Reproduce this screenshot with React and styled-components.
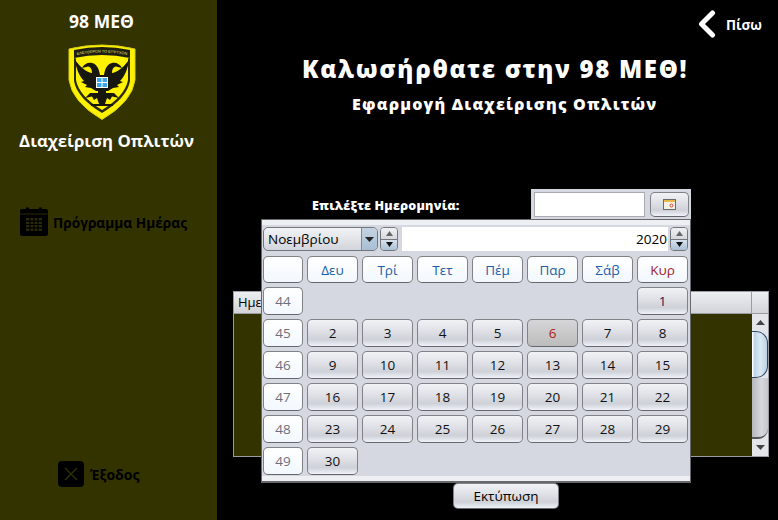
import React from 'react';
import styled, { createGlobalStyle, css } from 'styled-components';

const Global = createGlobalStyle`
  html, body { margin: 0; padding: 0; background: #000; }
  * { box-sizing: border-box; }
`;

const Page = styled.div`
  display: flex;
  width: 778px;
  height: 520px;
  overflow: hidden;
  font-family: 'Open Sans', 'Noto Sans', sans-serif;
`;

const Sidebar = styled.aside`
  width: 217px;
  height: 520px;
  background: #333300;
  display: flex;
  flex-direction: column;
  align-items: center;
  flex-shrink: 0;
`;

const UnitName = styled.div`
  margin: 10px 14px 0 0;
  color: #fff;
  font-size: 17.5px;
  line-height: 22px;
  font-weight: 700;
`;

const CrestWrap = styled.div`
  margin: 12px 14px 0 0;
  height: 76px;
`;

const SideTitle = styled.div`
  margin: 9px 4px 0 0;
  color: #fff;
  font-size: 16.8px;
  line-height: 24px;
  font-weight: 700;
  white-space: nowrap;
`;

const NavItem = styled.div`
  display: flex;
  align-items: center;
  align-self: flex-start;
  color: #000;
  font-weight: 700;
  white-space: nowrap;
  font-size: ${({ $size }) => $size}px;
  gap: ${({ $gap }) => $gap}px;
  margin-left: ${({ $left }) => $left}px;
  margin-top: ${({ $top }) => $top}px;
`;

const NavLabel = styled.span`
  padding-top: 1px;
`;

const ExitBox = styled.div`
  width: 26px;
  height: 26px;
  border-radius: 4px;
  background: #000;
  display: flex;
  align-items: center;
  justify-content: center;
`;

const Main = styled.main`
  position: relative;
  flex: 1;
  display: flex;
  flex-direction: column;
  background: #000;
  color: #fff;
`;

const BackRow = styled.div`
  display: flex;
  justify-content: flex-end;
  align-items: center;
  gap: 10px;
  height: 28px;
  margin: 10px 16px 0 0;
  font-size: 13.5px;
  font-weight: 700;
`;

const Title = styled.h1`
  margin: 15px 0 0 85px;
  font-size: 24px;
  line-height: 32px;
  font-weight: 800;
  letter-spacing: 1.7px;
  white-space: nowrap;
`;

const Subtitle = styled.h2`
  margin: 9px 0 0 135px;
  font-size: 16px;
  line-height: 20px;
  font-weight: 800;
  letter-spacing: 1.2px;
  white-space: nowrap;
`;

const DateRow = styled.div`
  display: flex;
  align-items: center;
  margin: 75px 0 0 95px;
  height: 30px;
`;

const DateLabel = styled.div`
  width: 219px;
  padding-top: 2px;
  font-size: 12.5px;
  font-weight: 800;
  letter-spacing: 0.2px;
  white-space: nowrap;
`;

const Picker = styled.div`
  width: 160px;
  height: 30px;
  background: #d5d8e0;
  display: flex;
  align-items: center;
  padding: 0 2px 0 3px;
  gap: 5px;
`;

const DateInput = styled.div`
  width: 111px;
  height: 25px;
  background: #fff;
  border: 1px solid #a9abb0;
`;

const buttonFace = css`
  background: linear-gradient(#f1f2f6 0%, #e0e2e8 40%, #cfd1d8 75%, #f0f2fa 100%);
  border: 1px solid #808286;
  border-bottom-color: #66686c;
  border-radius: 5px;
`;

const PickerButton = styled.div`
  ${buttonFace}
  width: 39px;
  height: 25px;
  display: flex;
  align-items: center;
  justify-content: center;
`;

const Grid = styled.div`
  margin: 72px 0 0 16px;
  width: 536px;
  height: 166px;
  border: 1px solid #9a9ca3;
  background: #333300;
  display: flex;
  flex-direction: column;
  color: #000;
`;

const GridHeader = styled.div`
  height: 22px;
  background: linear-gradient(#eceef2, #d2d4da);
  border-bottom: 1px solid #9a9ca3;
  display: flex;
  font-size: 13px;
  line-height: 20px;
`;

const HeaderCell = styled.div`
  flex: 1;
  padding-left: 4px;
  border-right: 1px solid #9a9ca3;
`;

const HeaderEnd = styled.div`
  width: 16px;
`;

const GridBody = styled.div`
  flex: 1;
  display: flex;
  justify-content: flex-end;
`;

const Scrollbar = styled.div`
  width: 16px;
  background: #e4e5ea;
  display: flex;
  flex-direction: column;
  align-items: center;
`;

const ScrollArrow = styled.div`
  height: ${({ $h }) => $h}px;
  width: 100%;
  flex-shrink: 0;
  display: flex;
  align-items: center;
  justify-content: center;
`;

const Thumb = styled.div`
  width: 100%;
  height: 47px;
  flex-shrink: 0;
  border: 1px solid #2d4a60;
  border-left: 0;
  border-radius: 0 12px 12px 0;
  background: linear-gradient(90deg, #fff 0 1px, #b7d3ea 2px, #dce9f4 55%, #bcd2e5);
`;

const Track = styled.div`
  flex: 1;
  width: 100%;
  border-bottom: 2px solid #555;
  border-radius: 0 0 10px 0;
  background: linear-gradient(90deg, #b5b7bd, #d6d8dd 60%, #c3c5cb);
`;

const PrintButton = styled.div`
  ${buttonFace}
  align-self: flex-start;
  margin: 26px 0 0 236px;
  width: 106px;
  height: 26px;
  color: #000;
  font-size: 13.5px;
  line-height: 24px;
  text-align: center;
`;

const Popup = styled.div`
  position: absolute;
  left: 44px;
  top: 219px;
  width: 430px;
  height: 264px;
  border: 1px solid #66686d;
  border-width: 1px 1px 2px 1px;
  background: #d5d8e0;
  padding: 7px 2px 0 1px;
  color: #000;
  font-size: 13.5px;
  &::before {
    content: '';
    position: absolute;
    left: 0;
    right: 0;
    top: 0;
    height: 5px;
    background: #eeeff3;
  }
  &::after {
    content: '';
    position: absolute;
    left: 0;
    right: 0;
    bottom: 0;
    height: 5px;
    background: #eeeff3;
  }
`;

const PopupTop = styled.div`
  display: flex;
  align-items: center;
  height: 24px;
`;

const MonthSelect = styled.div`
  width: 115px;
  height: 24px;
  border: 1px solid #73767c;
  border-radius: 5px;
  background: linear-gradient(#f2f3f6, #d2d5dc);
  display: flex;
  align-items: center;
  justify-content: space-between;
  padding-left: 4px;
  overflow: hidden;
`;

const MonthArrow = styled.div`
  width: 16px;
  height: 22px;
  background: linear-gradient(#c4d3e2, #a8bfd4);
  border-left: 1px solid #7f8a96;
  display: flex;
  align-items: center;
  justify-content: center;
`;

const Spinner = styled.div`
  width: 18px;
  height: 24px;
  margin-left: ${({ $left }) => $left}px;
  border: 1px solid #73767c;
  border-radius: 4px;
  display: flex;
  flex-direction: column;
  overflow: hidden;
`;

const SpinPart = styled.div`
  flex: 1;
  display: flex;
  align-items: center;
  justify-content: center;
  background: ${({ $active }) => ($active ? 'linear-gradient(#d8e2ec, #a9c0d6)' : 'linear-gradient(#f0f1f4, #d6d8de)')};
  ${({ $active }) => $active && 'border-top: 1px solid #73767c;'}
`;

const YearField = styled.div`
  margin-left: 4px;
  width: 266px;
  height: 24px;
  background: #fff;
  text-align: right;
  line-height: 24px;
  padding-right: 1px;
`;

const Days = styled.div`
  display: grid;
  grid-template-columns: 40px repeat(7, 51px);
  grid-template-rows: 27px repeat(6, 28px);
  gap: 4px;
  margin-top: 5px;
  font-size: 13.5px;
`;

const DayCell = styled.div`
  ${buttonFace}
  grid-column: ${({ $col }) => $col || 'auto'};
  display: flex;
  align-items: center;
  justify-content: center;
  color: ${({ $first }) => ($first ? '#2a1050' : '#111')};
  ${({ $today }) => $today && css`
    background: linear-gradient(#d6d6d8, #bcbcbc);
    color: #b01818;
  `}
`;

const WeekCell = styled.div`
  border: 1px solid #808286;
  border-bottom-color: #66686c;
  border-radius: 5px;
  background: linear-gradient(#fff, #f2f8fe);
  grid-column: 1;
  display: flex;
  align-items: center;
  justify-content: center;
  color: ${({ $head }) => $head || '#706f78'};
`;

const HeadCell = styled(WeekCell)`
  grid-column: auto;
`;

function Crest() {
  const half = (
    <>
      <path d="M32 31 C31 25 29 20 24 19 C20 18 16 20 14 24 L20 22.500 C23 23 24 26 24 29 C20 29 13 24 7 16 C8 24 11 32 16 37 L13 38 L19 41 L17 43 L23 44 L28 47 L34 47 L34 31 Z" fill="#17170f" />
      <path d="M30 44 L30 49 L22 49 L17 54 L24 52.500 L26 56 L29 54 L31 60 L34 62 L34 44 Z" fill="#17170f" />
      <path d="M23 60 H34 V62 H23 Z" fill="#17170f" />
    </>
  );
  return (
    <svg width="68" height="76" viewBox="0 0 68 76">
      <path d="M1 5 Q34 -3 67 5 L67 36 Q64 58 34 75.500 Q4 58 1 36 Z" fill="#fff200" stroke="#d8cf10" />
      <path d="M6 6 Q34 0 62 6 L62 14 Q34 8 6 14 Z" fill="#1d1d12" />
      <path id="shieldText" d="M7 11.500 Q34 5.500 61 11.500" fill="none" />
      <text fontFamily="'Liberation Sans', sans-serif" fontSize="3.800" fill="#e8e060" textAnchor="middle">
        <textPath href="#shieldText" startOffset="50%">ΕΛΕΥΘΕΡΟΝ ΤΟ ΕΥΨΥΧΟΝ</textPath>
      </text>
      <path d="M6 14 L6 37 Q9 54 34 69 Q59 54 62 37 L62 14 L60 14.500 L60 36 Q57 52 34 66 Q11 52 8 36 L8 14.500 Z" fill="#2a2a10" />
      {half}
      <g transform="translate(68 0) scale(-1 1)">{half}</g>
      <rect x="28" y="33" width="12" height="11" fill="#fff" />
      <path d="M29 34h4.500v4h-4.500z M34.500 34h4.500v4h-4.500z M29 39h4.500v4h-4.500z M34.500 39h4.500v4h-4.500z" fill="#3ea5ea" />
    </svg>
  );
}

function CalendarIcon() {
  return (
    <svg width="28" height="29" viewBox="0 0 28 29">
      <path d="M2 2 H6 V0.500 H9 V2 H19 V0.500 H22 V2 H26 Q28 2 28 4 V27 Q28 29 26 29 H2 Q0 29 0 27 V4 Q0 2 2 2 Z" fill="#000" />
      <path d="M0 7 H28" stroke="#333300" strokeWidth="0.800" />
      <path d="M6 11h16v13H6z" fill="#2a2a08" />
      <path d="M6 14.200h16 M6 17.500h16 M6 20.800h16 M10 11v13 M14 11v13 M18 11v13" stroke="#000" strokeWidth="1.200" />
    </svg>
  );
}

const Up = ({ c = '#666', w = 7 }) => (
  <svg width={w} height="5" viewBox="0 0 7 5" preserveAspectRatio="none"><path d="M3.500 0 L7 5 H0 Z" fill={c} /></svg>
);
const Down = ({ c = '#111', w = 7 }) => (
  <svg width={w} height="5" viewBox="0 0 7 5" preserveAspectRatio="none"><path d="M0 0 H7 L3.500 5 Z" fill={c} /></svg>
);

const dayNames = [
  ['Δευ', '#1c5fa8'], ['Τρί', '#1c5fa8'], ['Τετ', '#1c5fa8'], ['Πέμ', '#1c5fa8'],
  ['Παρ', '#1c5fa8'], ['Σάβ', '#1c5fa8'], ['Κυρ', '#a01c2c'],
];

const weeks = [
  [45, [2, 3, 4, 5, 6, 7, 8]],
  [46, [9, 10, 11, 12, 13, 14, 15]],
  [47, [16, 17, 18, 19, 20, 21, 22]],
  [48, [23, 24, 25, 26, 27, 28, 29]],
  [49, [30]],
];

export default function App() {
  return (
    <Page>
      <Global />
      <Sidebar>
        <UnitName>98 ΜΕΘ</UnitName>
        <CrestWrap><Crest /></CrestWrap>
        <SideTitle>Διαχείριση Οπλιτών</SideTitle>
        <NavItem $size={13.7} $gap={5} $left={20} $top={54}>
          <CalendarIcon />
          <NavLabel>Πρόγραμμα Ημέρας</NavLabel>
        </NavItem>
        <NavItem $size={14} $gap={6} $left={58} $top={225}>
          <ExitBox>
            <svg width="14" height="14" viewBox="0 0 14 14">
              <path d="M1 1 L13 13 M13 1 L1 13" stroke="#333300" strokeWidth="1.200" />
            </svg>
          </ExitBox>
          <NavLabel>Έξοδος</NavLabel>
        </NavItem>
      </Sidebar>
      <Main>
        <BackRow>
          <svg width="18" height="28" viewBox="0 0 18 28">
            <path d="M14.500 3 L3.500 14 L14.500 25" fill="none" stroke="#fff" strokeWidth="5" strokeLinecap="round" strokeLinejoin="round" />
          </svg>
          <NavLabel>Πίσω</NavLabel>
        </BackRow>
        <Title>Καλωσήρθατε στην 98 ΜΕΘ!</Title>
        <Subtitle>Εφαρμογή Διαχείρισης Οπλιτών</Subtitle>
        <DateRow>
          <DateLabel>Επιλέξτε Ημερομηνία:</DateLabel>
          <Picker>
            <DateInput />
            <PickerButton>
              <svg width="13" height="11" viewBox="0 0 13 11">
                <rect x="0.500" y="0.500" width="12" height="10" fill="#f4f0e4" stroke="#6b6b6b" />
                <rect x="1" y="1" width="11" height="2" fill="#e8b84a" />
                <circle cx="8.500" cy="6.500" r="1.500" fill="none" stroke="#d8403a" />
              </svg>
            </PickerButton>
          </Picker>
        </DateRow>
        <Grid>
          <GridHeader>
            <HeaderCell>Ημε</HeaderCell>
            <HeaderEnd />
          </GridHeader>
          <GridBody>
            <Scrollbar>
              <ScrollArrow $h={17}><Up c="#444" w={9} /></ScrollArrow>
              <Thumb />
              <Track />
              <ScrollArrow $h={17}><Down c="#444" w={9} /></ScrollArrow>
            </Scrollbar>
          </GridBody>
        </Grid>
        <PrintButton>Εκτύπωση</PrintButton>
        <Popup>
          <PopupTop>
            <MonthSelect>
              Νοεμβρίου
              <MonthArrow><Down c="#222" w={9} /></MonthArrow>
            </MonthSelect>
            <Spinner $left={2}>
              <SpinPart><Up /></SpinPart>
              <SpinPart $active><Down /></SpinPart>
            </Spinner>
            <YearField>2020</YearField>
            <Spinner $left={2}>
              <SpinPart><Up /></SpinPart>
              <SpinPart $active><Down /></SpinPart>
            </Spinner>
          </PopupTop>
          <Days>
            <HeadCell />
            {dayNames.map(([name, color]) => (
              <HeadCell key={name} $head={color}>{name}</HeadCell>
            ))}
            <WeekCell>44</WeekCell>
            <DayCell $col={8} $first>1</DayCell>
            {weeks.map(([week, days]) => (
              <React.Fragment key={week}>
                <WeekCell>{week}</WeekCell>
                {days.map((d) => <DayCell key={d} $today={d === 6}>{d}</DayCell>)}
              </React.Fragment>
            ))}
          </Days>
        </Popup>
      </Main>
    </Page>
  );
}
